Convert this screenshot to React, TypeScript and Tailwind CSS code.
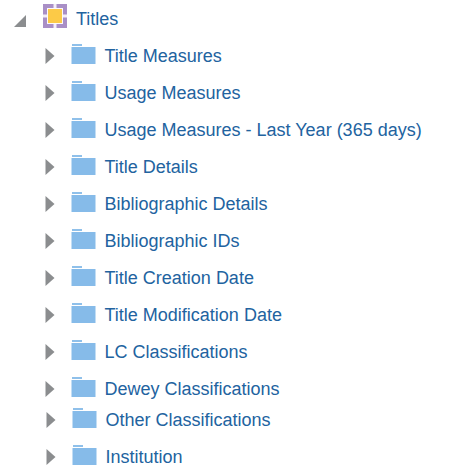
const items: [string, string][] = [
  ["Title Measures", "h-[37px] pl-[45px]"],
  ["Usage Measures", "h-[37px] pl-[45px]"],
  ["Usage Measures - Last Year (365 days)", "h-[37px] pl-[45px]"],
  ["Title Details", "h-[37px] pl-[45px]"],
  ["Bibliographic Details", "h-[37px] pl-[45px]"],
  ["Bibliographic IDs", "h-[37px] pl-[45px]"],
  ["Title Creation Date", "h-[37px] pl-[45px]"],
  ["Title Modification Date", "h-[37px] pl-[45px]"],
  ["LC Classifications", "h-[37px] pl-[45px]"],
  ["Dewey Classifications", "h-[37px] pl-[45px]"],
  ["Other Classifications", "h-[37px] pl-[46px] -mt-[6px]"],
  ["Institution", "h-[37px] pl-[46px]"],
];

function Arrow() {
  return (
    <svg width="10" height="16" viewBox="0 0 10 16" className="shrink-0 -mt-[1px]">
      <path d="M0.5 0 L9.5 8 L0.5 16 Z" fill="#8b8d8f" />
    </svg>
  );
}

function Folder() {
  return (
    <svg width="25" height="20" viewBox="0 0 25 20" className="shrink-0 ml-[16px] -mt-[5px]">
      <rect x="1" y="0" width="10" height="2" fill="#8fc0ea" />
      <rect x="0.5" y="3" width="24" height="17" fill="#86bbe9" />
    </svg>
  );
}

export default function App() {
  return (
    <div className="w-[461px] h-[470px] bg-white overflow-hidden font-['Liberation_Sans',Arial,sans-serif] text-[#22639f]">
      <div className="flex items-center h-[38px]">
        <svg width="12" height="12" viewBox="0 0 12 12" className="shrink-0 ml-[14px] mt-[4px]">
          <path d="M12 0 L12 12 L0 12 Z" fill="#8b8d8f" />
        </svg>
        <svg width="24" height="24" viewBox="0 0 24 24" className="shrink-0 ml-[17px] -mt-[6px]">
          <rect x="0" y="0" width="24" height="24" fill="#a98fc6" />
          <rect x="10.5" y="0" width="3" height="24" fill="#f3eef8" />
          <rect x="0" y="10.5" width="24" height="3" fill="#f3eef8" />
          <rect x="4" y="4" width="16" height="16" fill="#fbf8fc" />
          <rect x="5" y="5" width="14" height="14" fill="#fcca47" />
        </svg>
        <span className="ml-[9px] text-[18px]">Titles</span>
      </div>
      {items.map(([label, cls]) => (
        <div key={label} className={`flex items-center ${cls}`}>
          <Arrow />
          <Folder />
          <span className="ml-[8.5px] text-[18px] whitespace-nowrap">{label}</span>
        </div>
      ))}
    </div>
  );
}
